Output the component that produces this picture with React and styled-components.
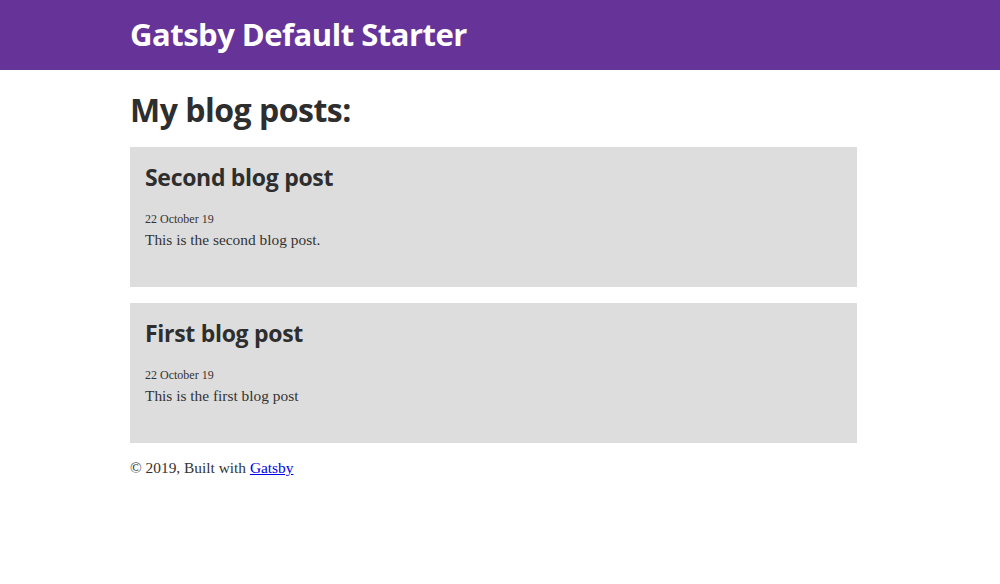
import React from "react";
import styled, { createGlobalStyle } from "styled-components";

const posts = [
  { title: "Second blog post", date: "22 October 19", excerpt: "This is the second blog post." },
  { title: "First blog post", date: "22 October 19", excerpt: "This is the first blog post" }
];

const App = () => (
  <>
    <GlobalStyle />
    <Header>
      <HeaderInner>
        <SiteTitle>Gatsby Default Starter</SiteTitle>
      </HeaderInner>
    </Header>
    <Main>
      <PageTitle>My blog posts:</PageTitle>
      <PostList>
        {posts.map(post => (
          <PostCard key={post.title}>
            <PostTitle>{post.title}</PostTitle>
            <PostDate>{post.date}</PostDate>
            <PostExcerpt>{post.excerpt}</PostExcerpt>
          </PostCard>
        ))}
      </PostList>
      <Footer>
        © 2019, Built with <a href="#gatsby">Gatsby</a>
      </Footer>
    </Main>
  </>
);

const GlobalStyle = createGlobalStyle`
  body {
    margin: 0;
    background: #fff;
    color: #333;
    font-family: Georgia, "Liberation Serif", serif;
  }
  * { box-sizing: border-box; }
`;

const sans = `"Open Sans", "Noto Sans", sans-serif`;

const Header = styled.header`
  background: #663399;
  height: 70px;
`;

const HeaderInner = styled.div`
  margin-left: 130px;
  width: 727px;
  display: flex;
  align-items: center;
  height: 100%;
`;

const SiteTitle = styled.h1`
  margin: 0 0 2px;
  font-family: ${sans};
  font-weight: 700;
  font-size: 31px;
  letter-spacing: -0.5px;
  color: #fff;
`;

const Main = styled.main`
  margin-left: 130px;
  width: 727px;
  padding-top: 21px;
`;

const PageTitle = styled.h2`
  margin: 0 0 18px;
  font-family: ${sans};
  font-weight: 700;
  font-size: 32px;
  line-height: 38px;
  letter-spacing: -0.5px;
  color: #2e2e2e;
`;

const PostList = styled.div`
  display: flex;
  flex-direction: column;
  gap: 16px;
`;

const PostCard = styled.article`
  background: #dddddd;
  height: 140px;
  padding: 14px 16px 14px 15px;
`;

const PostTitle = styled.h3`
  margin: 0 0 18px;
  font-family: ${sans};
  font-weight: 700;
  font-size: 23px;
  line-height: 32px;
  letter-spacing: -0.3px;
  color: #2e2e2e;
`;

const PostDate = styled.div`
  font-size: 12px;
  line-height: 17px;
  color: #333;
`;

const PostExcerpt = styled.p`
  margin: 2px 0 0;
  font-size: 15.4px;
  line-height: 20px;
  color: #333;
`;

const Footer = styled.footer`
  margin-top: 15px;
  font-size: 15.4px;
  line-height: 20px;
  color: #333;

  a {
    color: #0000ee;
  }
`;

export default App;
